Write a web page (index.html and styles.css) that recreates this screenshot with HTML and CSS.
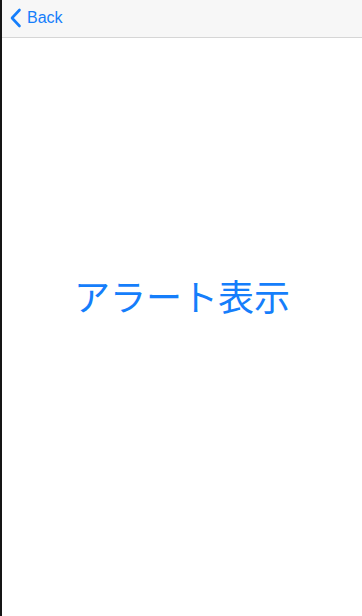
FILE: index.html
```html
<!DOCTYPE html>
<html lang="ja">
<head>
    <meta charset="UTF-8">
    <meta name="viewport" content="width=device-width, initial-scale=1.0">
    <title>アラート表示</title>
    <link rel="stylesheet" href="styles.css">
</head>
<body>
    <div class="screen">
        <header class="nav-bar">
            <a href="#" class="back-btn">
                <svg class="back-icon" width="13" height="20" viewBox="0 0 13 20">
                    <path d="M10.5 2 L3 10 L10.5 18" fill="none" stroke="#157efb" stroke-width="2.6" stroke-linecap="round" stroke-linejoin="round"/>
                </svg>
                <span>Back</span>
            </a>
        </header>
        <main class="content">
            <button class="alert-btn">アラート表示</button>
        </main>
    </div>
</body>
</html>
```

FILE: styles.css
```css
* {
    box-sizing: border-box;
    margin: 0;
    padding: 0;
}

body {
    background: #fff;
    font-family: 'Liberation Sans', 'Noto Sans CJK JP', sans-serif;
}

.screen {
    width: 362px;
    height: 616px;
    border-left: 2px solid #151515;
    display: flex;
    flex-direction: column;
}

.nav-bar {
    height: 38px;
    background: #f7f7f7;
    border-bottom: 1px solid #d6d6d6;
    display: flex;
    align-items: center;
    padding-left: 7px;
}

.back-btn {
    display: flex;
    align-items: center;
    gap: 5px;
    color: #157efb;
    text-decoration: none;
    font-size: 16px;
    margin-top: -2px;
}

.content {
    flex: 1;
    display: flex;
    align-items: center;
    justify-content: center;
    padding-bottom: 64px;
}

.alert-btn {
    background: none;
    border: none;
    color: #157efb;
    font-family: 'Noto Sans CJK JP', sans-serif;
    font-size: 36px;
    font-weight: 400;
    margin-left: 0;
}
```
